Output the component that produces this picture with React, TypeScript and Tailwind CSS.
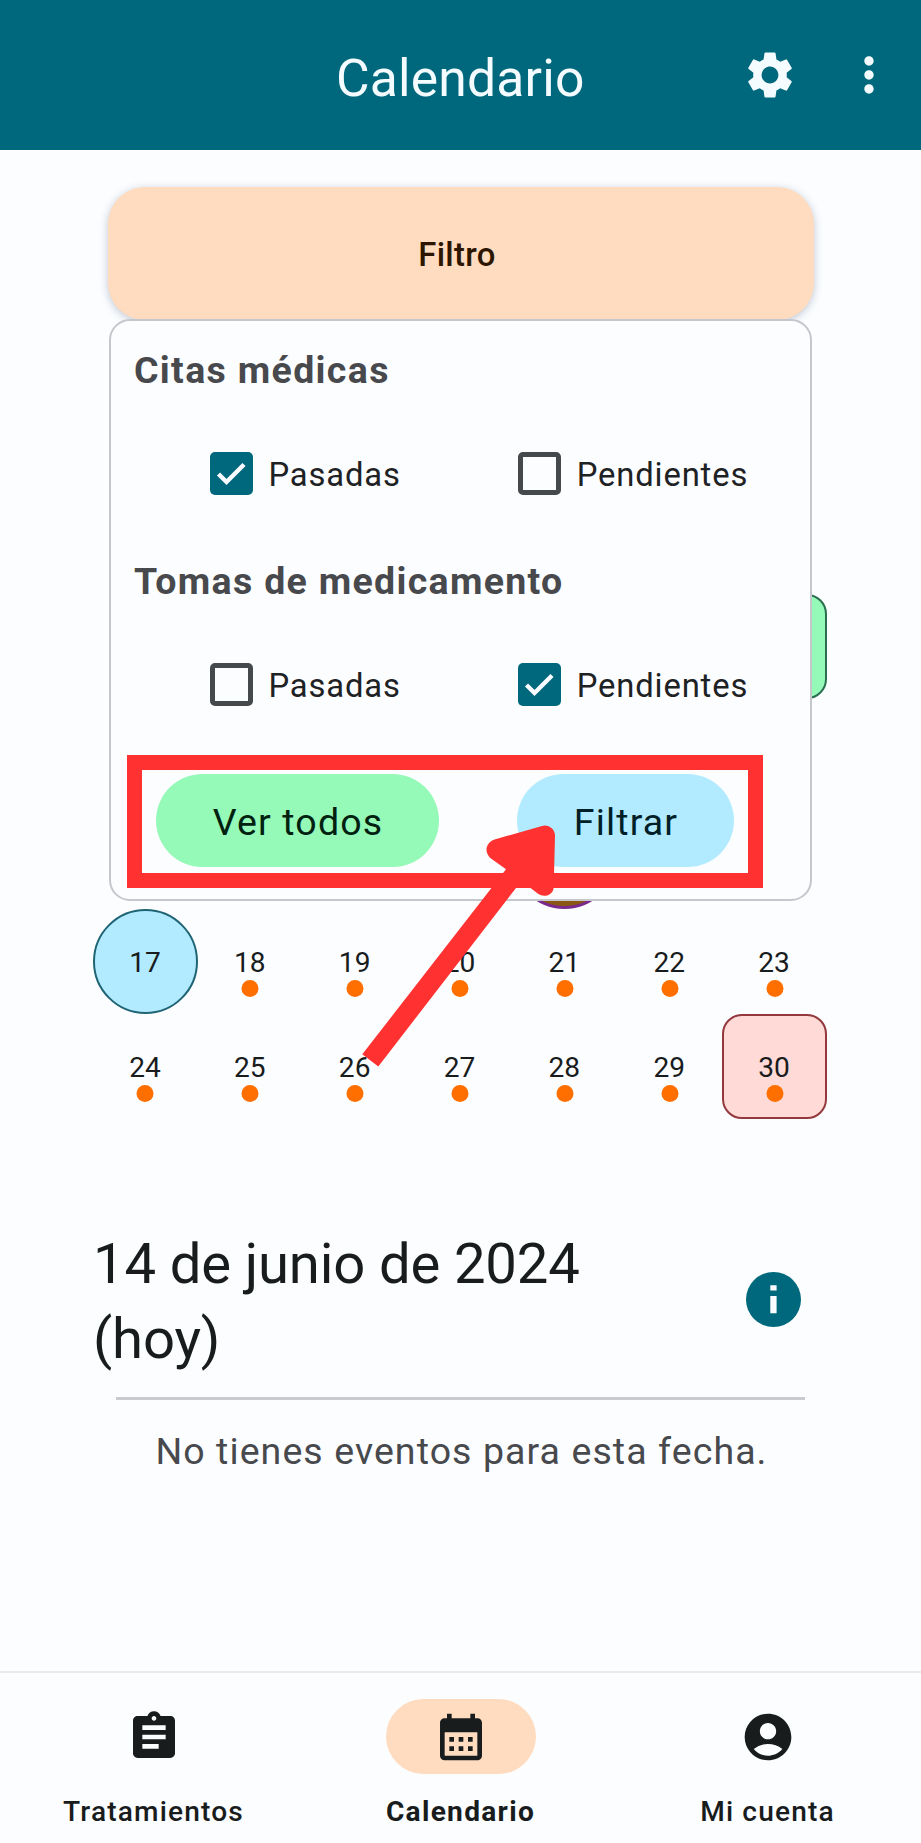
import React from "react";
import { MdAccountCircle, MdAssignment, MdCalendarMonth, MdMoreVert, MdSettings } from "react-icons/md";

type Day = { day?: number; dot?: boolean; mark?: string };

const BLANK: Day = {};

const weeks: Day[][] = [
  [BLANK, BLANK, BLANK, BLANK, BLANK, BLANK, { mark: "rounded-[20px] border-2 border-[#2a6f50] bg-[#95f9b8]" }],
  [BLANK, BLANK, BLANK, BLANK, BLANK, BLANK, BLANK],
  [BLANK, BLANK, BLANK, BLANK, { mark: "rounded-full border-3 border-[#7a2a8c] bg-[#8a5814]" }, BLANK, BLANK],
  [
    { day: 17, mark: "rounded-full border-2 border-[#1f6474] bg-[#b2ebff]" },
    { day: 18, dot: true },
    { day: 19, dot: true },
    { day: 20, dot: true },
    { day: 21, dot: true },
    { day: 22, dot: true },
    { day: 23, dot: true },
  ],
  [
    { day: 24, dot: true },
    { day: 25, dot: true },
    { day: 26, dot: true },
    { day: 27, dot: true },
    { day: 28, dot: true },
    { day: 29, dot: true },
    { day: 30, dot: true, mark: "rounded-[20px] border-2 border-[#93393d] bg-[#ffdad7]" },
  ],
];

function DayCell({ day, dot, mark }: Day) {
  return (
    <div className={`relative flex items-center justify-center text-[28.1px] text-[#191c1d] ${mark ?? ""}`}>
      {day && <span className="pt-[3px] pr-px leading-none">{day}</span>}
      {dot && <span className="absolute top-1/2 left-1/2 mt-[18px] size-[17px] -translate-x-1/2 rounded-full bg-[#fe6f00]" />}
    </div>
  );
}

function Check({ label, checked = false }: { label: string; checked?: boolean }) {
  return (
    <label className="flex items-center gap-[16px] text-[32.8px] leading-[42px] tracking-[0.85px] text-[#1f2224]">
      {checked ? (
        <span className="flex size-[43px] items-center justify-center rounded-[5px] bg-[#00687c]">
          <svg viewBox="0 0 43 43" className="size-[43px]" fill="none" stroke="#fbfcff" strokeWidth="4.4">
            <path d="M8.5 22 L16.5 30 L34 12.5" />
          </svg>
        </span>
      ) : (
        <span className="size-[43px] rounded-[5px] border-5 border-[#46494b]" />
      )}
      <span className="pt-[2px]">{label}</span>
    </label>
  );
}

function CheckRow({ first, second }: { first: boolean; second: boolean }) {
  return (
    <div className="flex h-[43px] items-center pl-[98.5px]">
      <div className="w-[308.2px]">
        <Check label="Pasadas" checked={first} />
      </div>
      <Check label="Pendientes" checked={second} />
    </div>
  );
}

function FilterPanel() {
  return (
    <section className="absolute top-[169px] left-[109px] h-[582px] w-[703px] rounded-[21px] border-2 border-[#c5c7cc] bg-[#fbfdff]">
      <h2 className="mt-[25px] pl-[23px] text-[37.5px] leading-[48px] font-bold tracking-[1.33px] text-[#48494d]">Citas médicas</h2>
      <div className="mt-[58px]">
        <CheckRow first second={false} />
      </div>
      <h2 className="mt-[62px] pl-[23px] text-[37.5px] leading-[48px] font-bold tracking-[1.3px] text-[#48494d]">
        Tomas de medicamento
      </h2>
      <div className="mt-[58px]">
        <CheckRow first={false} second />
      </div>
      <div className="mt-[49px] ml-[16px] flex h-[133px] w-[636px] items-start border-[15px] border-[#ff3131] pt-[4px] pl-[14px]">
        <button className="h-[93px] w-[283px] rounded-full bg-[#95f9b8] pt-[3px] pl-px text-[37.5px] tracking-[1.17px] text-[#00210f]">
          Ver todos
        </button>
        <button className="ml-[78px] h-[93px] w-[217px] rounded-full bg-[#b2ebff] pt-[3px] pl-px text-[37.5px] tracking-[1.17px] text-[#001f27]">
          Filtrar
        </button>
      </div>
    </section>
  );
}

function Arrow() {
  return (
    <svg className="absolute top-[670px] left-[350px] h-[250px] w-[220px]" viewBox="350 820 220 250" fill="#ff3131">
      <path d="M362.3 1054.3 L506 869.3 L491 858.5 Q485.500 854 486.700 847.500 Q488.500 841.500 494.500 839.500 L542 826 Q548 824.500 552 828.500 Q555 831.500 555 836 L553.700 887 Q553.500 893 548 895.200 Q542.500 897 538 893.800 L529 886.800 L516 888 L378.300 1066.500 Z" />
    </svg>
  );
}

function NavItem({ label, icon, active = false }: { label: string; icon: React.ReactNode; active?: boolean }) {
  return (
    <div className="flex w-[307px] flex-col items-center text-[#191c1d]">
      <div className={`flex h-[75px] w-[150px] items-center justify-center rounded-full ${active ? "bg-[#ffdcbf]" : ""}`}>{icon}</div>
      <span
        className={`mt-[19px] text-[28.1px] leading-[37px] ${active ? "font-bold tracking-[1.3px]" : "font-medium tracking-[1.17px]"}`}
      >
        {label}
      </span>
    </div>
  );
}

export default function App() {
  return (
    <div className="flex h-[1843px] w-[921px] flex-col overflow-hidden bg-[#fbfdff] font-['Roboto',sans-serif]">
      <header className="flex h-[150px] shrink-0 items-center bg-[#00687c] pr-[24px] text-[#f4fcff]">
        <h1 className="ml-[336px] w-[248px] text-center text-[51.6px] leading-[60px] tracking-[0.2px] whitespace-nowrap">
          <span className="block pt-[7px]">Calendario</span>
        </h1>
        <MdSettings className="ml-auto size-[56px]" />
        <MdMoreVert className="ml-[43px] size-[56px]" />
      </header>

      <main className="relative flex h-[1521px] shrink-0 flex-col">
        <button className="mt-[37px] ml-[108px] flex h-[133px] w-[706px] items-center justify-center rounded-[37px] bg-[#ffdcbf] pt-[5px] pr-[8px] text-[32.8px] font-medium tracking-[0.3px] text-[#2d1600] shadow-[0_2px_9px_rgba(60,70,100,0.3)]">
          Filtro
        </button>
        <div className="mt-[274px] ml-[93px] flex w-[734px] flex-col">
          {weeks.map((week, i) => (
            <div key={i} className="grid h-[105px] grid-cols-7">
              {week.map((d, j) => (
                <DayCell key={j} {...d} />
              ))}
            </div>
          ))}
        </div>
        <div className="mt-[106px] flex items-start pl-[93px]">
          <p className="w-[560px] pt-[2px] text-[56.25px] leading-[75px] tracking-[-0.17px] text-[#191c1d]">14 de junio de 2024 (hoy)</p>
          <svg viewBox="0 0 55 55" className="mt-[47px] ml-[92.5px] size-[55px]">
            <circle cx="27.500" cy="27.500" r="27.500" fill="#00687c" />
            <path d="M24.300 13.300h6.300v5.200h-6.300zM24.300 24h6.300v17.300h-6.300z" fill="#fbfcff" />
          </svg>
        </div>
        <div className="mt-[20px] ml-[116px] h-[3px] w-[689px] bg-[#c9cad0]" />
        <p className="mt-[26px] pl-[2px] text-center text-[37.5px] leading-[50px] tracking-[1.08px] text-[#48494d]">
          No tienes eventos para esta fecha.
        </p>
        <FilterPanel />
        <Arrow />
      </main>

      <nav className="flex h-[172px] shrink-0 border-t-2 border-[#e8eaed] pt-[26px]">
        <NavItem label="Tratamientos" icon={<MdAssignment className="size-[56px]" />} />
        <NavItem label="Calendario" active icon={<MdCalendarMonth className="size-[56px]" />} />
        <NavItem label="Mi cuenta" icon={<MdAccountCircle className="size-[56px]" />} />
      </nav>
    </div>
  );
}
